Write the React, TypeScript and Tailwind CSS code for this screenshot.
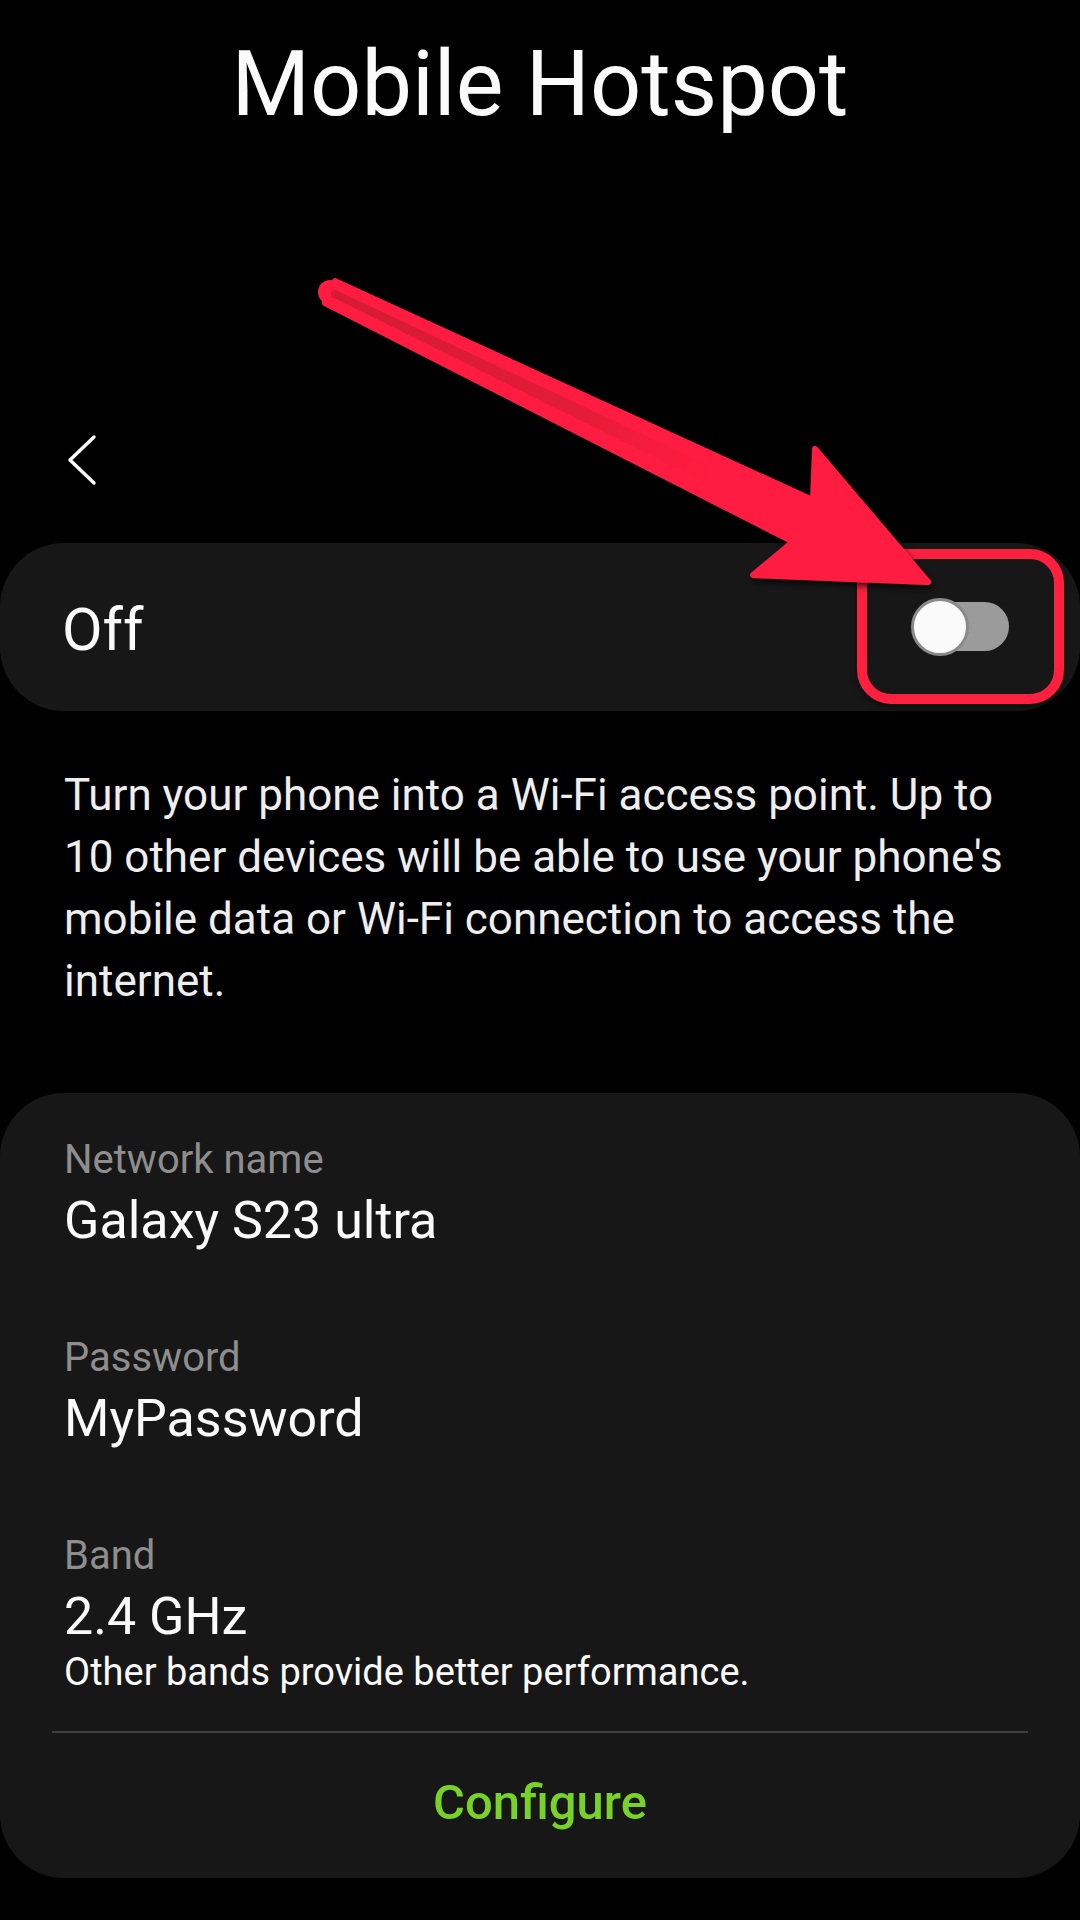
import React from "react";

function Arrow() {
  return (
    <svg
      className="absolute left-0 top-0 pointer-events-none"
      width={1080}
      height={720}
      viewBox="0 0 1080 720"
    >
      <defs>
        <filter id="sh" x="-10%" y="-10%" width="120%" height="130%">
          <feDropShadow dx="2" dy="4" stdDeviation="3" floodColor="#000" floodOpacity="0.7" />
        </filter>
        <linearGradient id="stripe" gradientUnits="userSpaceOnUse" x1="335" y1="294" x2="745" y2="492">
          <stop offset="0" stopColor="#d41a32" stopOpacity="1" />
          <stop offset="0.6" stopColor="#dc1b35" stopOpacity="0.8" />
          <stop offset="1" stopColor="#ff1f3f" stopOpacity="0" />
        </linearGradient>
      </defs>
      <g filter="url(#sh)">
        <circle cx="330" cy="292" r="12" fill="#ff1f3f" />
        <path
          d="M 335.2 281.2 L 813 500.3 L 815 449 L 928 582 L 753 575 L 793 541.7 L 324.8 302.8 Z"
          fill="#ff1f3f"
          stroke="#ff1f3f"
          strokeWidth="6"
          strokeLinejoin="round"
        />
        <path
          d="M 336.7 290.4 L 743.9 481.9 L 736.1 498.1 L 333.3 297.6 Z"
          fill="url(#stripe)"
        />
        <circle cx="335" cy="294" r="4" fill="#d41a32" />
      </g>
    </svg>
  );
}

function Field({
  label,
  value,
  top,
  sub,
}: {
  label: string;
  value: string;
  top: string;
  sub?: string;
}) {
  return (
    <div className={top}>
      <div className="text-[40px] leading-[50px] text-[#8e8e8e]">{label}</div>
      <div className="mt-[6px] text-[52px] leading-[60px] text-[#fafafa]">{value}</div>
      {sub && (
        <div className="mt-[3px] text-[38px] leading-[44px] text-[#fafafa]">{sub}</div>
      )}
    </div>
  );
}

export default function App() {
  return (
    <div
      className="relative w-[1080px] min-h-[1920px] bg-black overflow-hidden"
      style={{ fontFamily: "Roboto, 'Noto Sans', sans-serif" }}
    >
      <h1 className="pt-[35px] text-center text-[90px] leading-[100px] font-normal text-[#fafafa]">
        Mobile Hotspot
      </h1>

      <div className="mt-[295px] h-[60px] pl-[60px]">
        <svg width="40" height="60" viewBox="0 0 40 60">
          <path
            d="M34 7 L10 30 L34 53"
            fill="none"
            stroke="#fafafa"
            strokeWidth="3.5"
            strokeLinecap="round"
            strokeLinejoin="round"
          />
        </svg>
      </div>

      <div className="mt-[53px] flex h-[168px] items-center justify-between rounded-[64px] bg-[#171717] pl-[62px] pr-[71px]">
        <span className="mt-[5px] text-[59px] leading-[68px] text-[#fafafa]">Off</span>
        <div className="relative h-[58px] w-[98px]">
          <div className="absolute right-0 top-[4px] h-[49px] w-[88px] rounded-full bg-[#9b9b9b]" />
          <div className="absolute left-0 top-0 h-[58px] w-[58px] rounded-full border-[3px] border-[#8a8a8a] bg-[#fafafa]" />
        </div>
      </div>

      <div className="mt-[53px] px-[64px] text-[44px] leading-[62px] text-[#eeeeee]">
        <div className="whitespace-nowrap">Turn your phone into a Wi-Fi access point. Up to</div>
        <div className="whitespace-nowrap">10 other devices will be able to use your phone's</div>
        <div className="whitespace-nowrap">mobile data or Wi-Fi connection to access the</div>
        <div className="whitespace-nowrap">internet.</div>
      </div>

      <div className="mt-[81px] rounded-[64px] bg-[#171717] pt-[42px] pb-[45px]">
        <div className="px-[64px]">
          <Field top="" label="Network name" value="Galaxy S23 ultra" />
          <Field top="mt-[82px]" label="Password" value="MyPassword" />
          <Field
            top="mt-[82px]"
            label="Band"
            value="2.4 GHz"
            sub="Other bands provide better performance."
          />
        </div>
        <div className="mx-[52px] mt-[37px] h-[2px] bg-[#404040]" />
        <div className="mt-[40px] text-center text-[49px] leading-[60px] font-medium text-[#78d228]">
          Configure
        </div>
      </div>

      <div className="pointer-events-none absolute left-[857px] top-[549px] h-[155px] w-[207px] rounded-[34px] border-[10px] border-[#ff1f3f] shadow-[0_3px_6px_rgba(0,0,0,0.5)]" />
      <Arrow />
    </div>
  );
}
